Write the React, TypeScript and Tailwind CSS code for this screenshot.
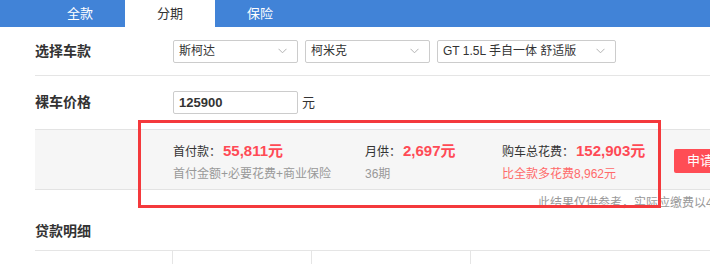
const font = {
  fontFamily: '"Liberation Sans", "Noto Sans CJK SC", sans-serif',
};

function Chevron() {
  return (
    <svg width="9" height="6" viewBox="0 0 9 6" className="shrink-0">
      <path d="M0.5 0.8 L4.5 4.8 L8.5 0.8" fill="none" stroke="#b3b3b3" strokeWidth="1" />
    </svg>
  );
}

function Select({ value, width }: { value: string; width: string }) {
  return (
    <div
      className={`${width} h-[23px] flex items-center justify-between border border-[#ccc] rounded-[2px] pl-[5px] pr-[10px] text-[12px] text-[#333] bg-white`}
    >
      <span className="whitespace-nowrap">{value}</span>
      <Chevron />
    </div>
  );
}

export default function App() {
  return (
    <div className="w-[710px] h-[264px] overflow-hidden bg-white relative" style={font}>
      <div className="w-[790px]">
        {/* tabs */}
        <div className="h-[27px] bg-[#4183d7] flex pl-[35px]">
          <div className="w-[90px] text-center leading-[27px] text-[13px] text-white">全款</div>
          <div className="w-[90px] text-center leading-[27px] text-[13px] text-[#333] bg-white">分期</div>
          <div className="w-[90px] text-center leading-[27px] text-[13px] text-white">保险</div>
        </div>

        <div className="pl-[35px]">
          <div className="h-[49px] flex items-center border-b border-[#e5e5e5]">
            <div className="w-[138px] text-[14px] font-bold text-[#333]">选择车款</div>
            <div className="flex gap-[7px]">
              <Select value="斯柯达" width="w-[125px]" />
              <Select value="柯米克" width="w-[125px]" />
              <Select value="GT 1.5L 手自一体 舒适版" width="w-[179px]" />
            </div>
          </div>

          <div className="h-[53px] flex items-center">
            <div className="w-[138px] text-[14px] font-bold text-[#333]">裸车价格</div>
            <div className="w-[125px] h-[23px] border border-[#ccc] rounded-[2px] pl-[5px] text-[13px] font-bold text-[#333] leading-[21px]">
              125900
            </div>
            <span className="ml-[4px] text-[13px] text-[#333]">元</span>
          </div>

          <div className="h-[61px] bg-[#f6f6f6] border-y border-[#e3e3e3] flex pl-[138px] pt-[11px]">
            <div className="w-[192px]">
              <div className="text-[12px] text-[#333] leading-[20px] whitespace-nowrap">
                首付款：<span className="ml-[2px] text-[15px] font-bold text-[#ff4a55]">55,811元</span>
              </div>
              <div className="mt-[3px] text-[12px] leading-[18px] text-[#999] whitespace-nowrap">首付金额+必要花费+商业保险</div>
            </div>
            <div className="w-[137px]">
              <div className="text-[12px] text-[#333] leading-[20px] whitespace-nowrap">
                月供：<span className="ml-[2px] text-[15px] font-bold text-[#ff4a55]">2,697元</span>
              </div>
              <div className="mt-[3px] text-[12px] leading-[18px] text-[#999]">36期</div>
            </div>
            <div className="w-[172px]">
              <div className="text-[12px] text-[#333] leading-[20px] whitespace-nowrap">
                购车总花费：<span className="ml-[2px] text-[15px] font-bold text-[#ff4a55]">152,903元</span>
              </div>
              <div className="mt-[3px] text-[12px] leading-[18px] text-[#ff6a6a] whitespace-nowrap">比全款多花费8,962元</div>
            </div>
            <div className="mt-[8px] w-[80px] h-[24px] bg-[#ff4d55] rounded-[2px] text-white text-[13px] leading-[24px] pl-[13px]">
              申请贷款
            </div>
          </div>

          <div className="mt-[4px] pl-[503px] text-[12px] leading-[18px] text-[#999] whitespace-nowrap">
            此结果仅供参考，实际应缴费以4S店为准
          </div>

          <div className="h-[38px] flex items-center text-[14px] font-semibold text-[#333]">贷款明细</div>

          <div className="border-t border-[#e5e5e5] flex h-[40px]">
            <div className="w-[137px]" />
            <div className="w-[139px] border-l border-[#e5e5e5]" />
            <div className="w-[159px] border-l border-[#e5e5e5] pl-[24px] pt-[13px] flex gap-[20px] text-[12px] leading-[16px] text-[#999]">
              <span>30%</span>
              <span>40%</span>
              <span>50%</span>
            </div>
            <div className="flex-1 border-l border-[#e5e5e5]" />
          </div>
        </div>
      </div>

      <div className="absolute left-[138px] top-[120px] w-[523px] h-[88px] border-[3px] border-[#f4393c]" />
    </div>
  );
}
